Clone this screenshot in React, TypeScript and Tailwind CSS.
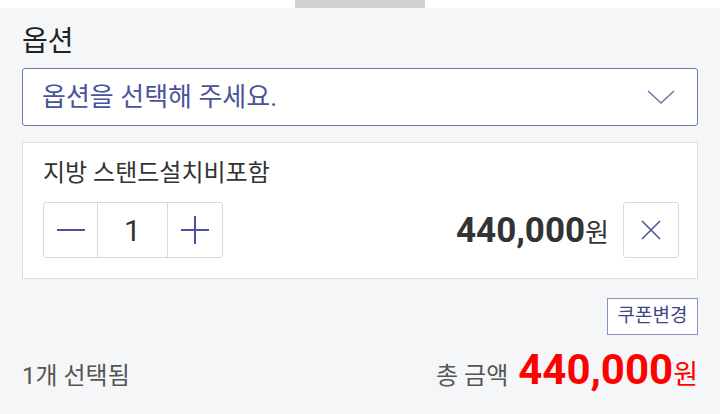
import React from "react";

const FONT = { fontFamily: 'Roboto, "Noto Sans CJK KR", sans-serif' };

function Chevron() {
  return (
    <svg width="28" height="14" viewBox="0 0 28 14" fill="none">
      <path d="M1 1l13 12L27 1" stroke="#6a71ad" strokeWidth="1.4" />
    </svg>
  );
}

function Counter() {
  return (
    <div className="flex h-[56px] w-[180px] rounded-[3px] border border-[#d9d9df] bg-white">
      <button className="flex w-[54px] items-center justify-center border-r border-[#d9d9df]">
        <svg width="28" height="4" viewBox="0 0 28 4">
          <path d="M0 2h28" stroke="#4d5399" strokeWidth="2" />
        </svg>
      </button>
      <div className="flex w-[70px] items-center justify-center border-r border-[#d9d9df] text-[30px] text-[#333]">1</div>
      <button className="flex flex-1 items-center justify-center">
        <svg width="28" height="28" viewBox="0 0 28 28">
          <path d="M0 14h28M14 0v28" stroke="#4d5399" strokeWidth="2" />
        </svg>
      </button>
    </div>
  );
}

export default function App() {
  return (
    <div className="h-[414px] w-[720px] overflow-hidden bg-[#f5f6f8]" style={FONT}>
      <div className="flex h-2 justify-center bg-white">
        <div className="h-2 w-[130px] bg-[#d1d1d1]" />
      </div>

      <div className="px-[22px]">
        <div className="mt-[16px] h-[36px] text-[28px] leading-[36px] text-[#222]">옵션</div>

        <div className="mt-[8px] flex h-[58px] items-center justify-between rounded-[3px] border border-[#7078b6] bg-white pl-[19px] pr-[22px]">
          <span className="text-[26px] text-[#4b5399]">옵션을 선택해 주세요.</span>
          <Chevron />
        </div>

        <div className="mt-[16px] w-[676px] border border-[#dedede] bg-white pb-[20px] pl-[20px] pr-[18px] pt-[16px]">
          <div className="h-[28px] text-[24px] leading-[28px] text-[#333]">지방 스탠드설치비포함</div>
          <div className="mt-[15px] flex items-center justify-between">
            <Counter />
            <div className="flex items-center gap-[14px]">
              <div className="flex items-baseline text-[#333]">
                <span className="text-[35px] leading-none font-bold">440,000</span>
                <span className="text-[26px] leading-none">원</span>
              </div>
              <button className="flex h-[56px] w-[56px] items-center justify-center rounded-[3px] border border-[#d9d9df] bg-white">
                <svg width="20" height="20" viewBox="0 0 20 20">
                  <path d="M1 1l18 18M19 1L1 19" stroke="#4d5399" strokeWidth="1.6" />
                </svg>
              </button>
            </div>
          </div>
        </div>

        <div className="mt-[19px] flex justify-end">
          <button className="h-[37px] w-[91px] border border-[#8b91c7] bg-white text-[19px] text-[#3f4688]">쿠폰변경</button>
        </div>

        <div className="mt-[14px] flex items-baseline justify-between">
          <span className="text-[24px] text-[#555]">1개 선택됨</span>
          <div className="flex items-baseline">
            <span className="mr-[10px] text-[24px] text-[#555]">총 금액</span>
            <span className="text-[42px] leading-none font-bold text-[#ff0000]">440,000</span>
            <span className="text-[27px] text-[#ff0000]">원</span>
          </div>
        </div>
      </div>
    </div>
  );
}
